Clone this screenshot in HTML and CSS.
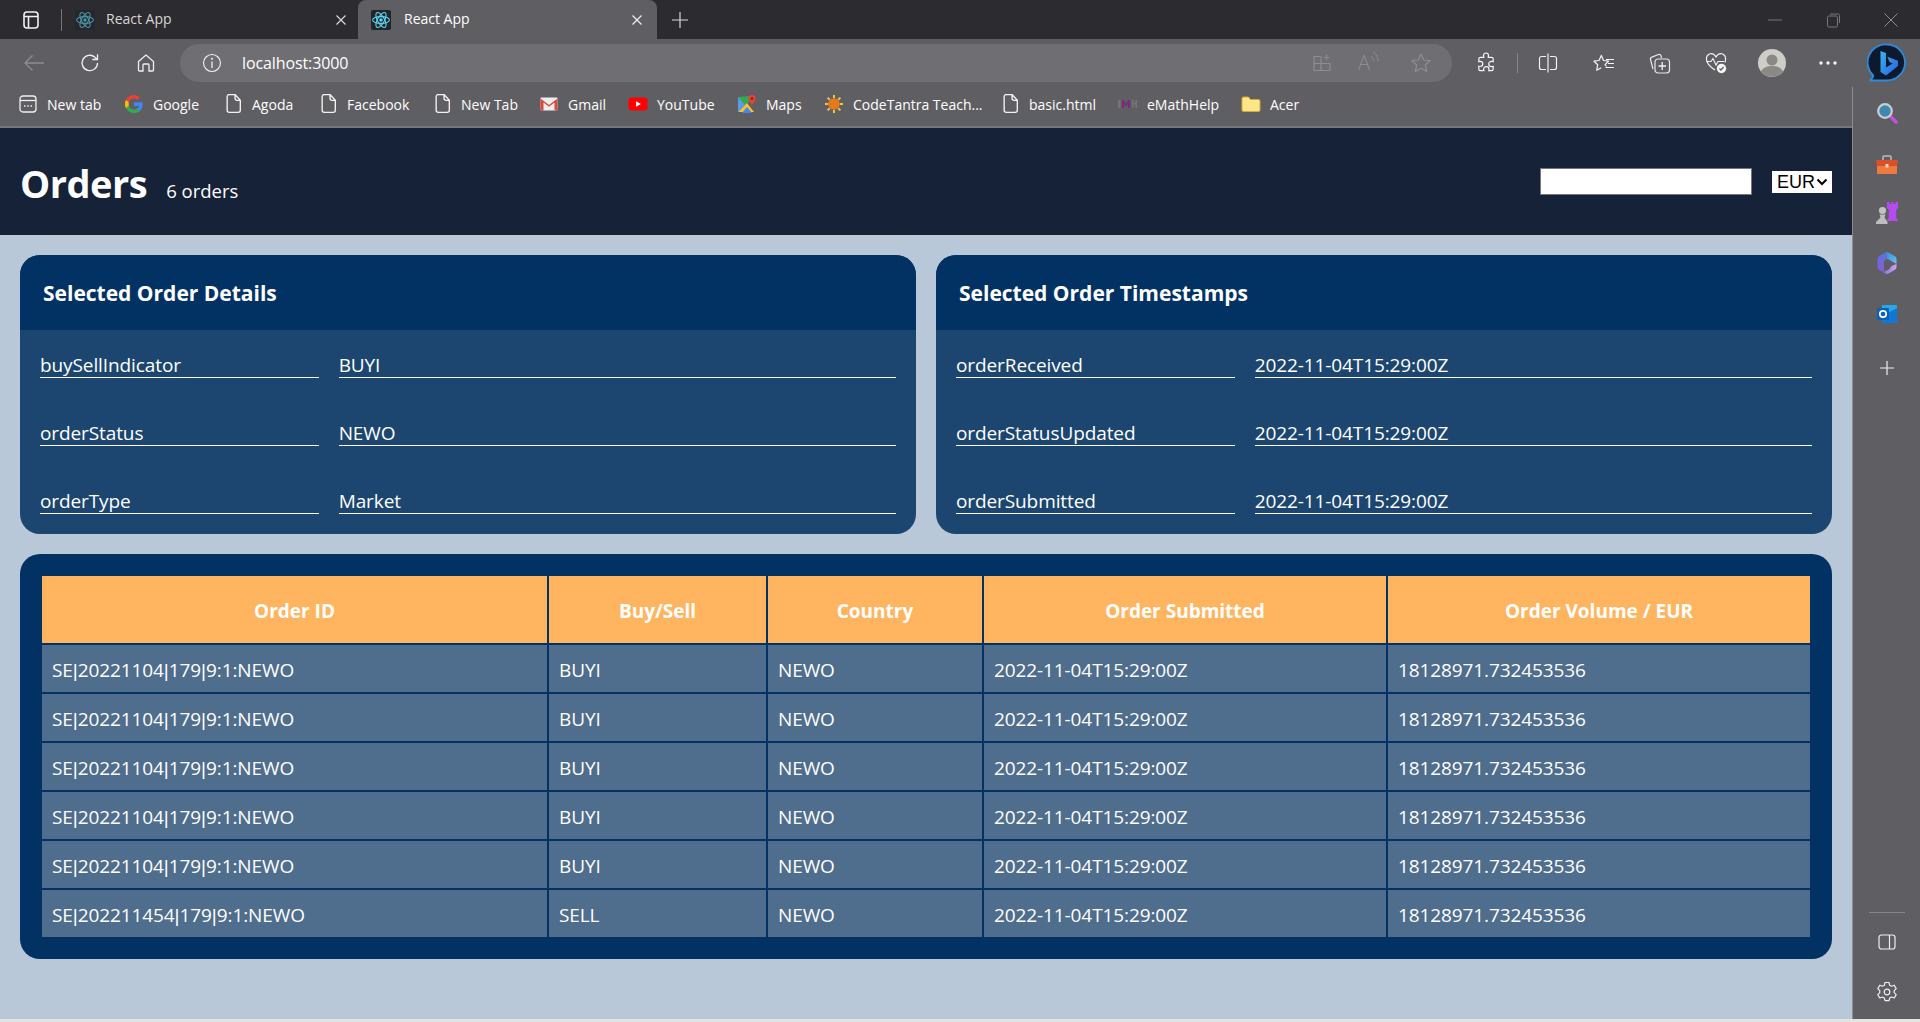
FILE: index.html
```html
<!DOCTYPE html>
<html lang="en">
<head>
<meta charset="utf-8">
<title>React App</title>
<link rel="stylesheet" href="styles.css">
</head>
<body>
<svg class="defs" width="0" height="0" aria-hidden="true">
  <defs>
    <linearGradient id="bingG" x1="0" y1="0" x2="1" y2="1"><stop offset="0" stop-color="#37b4f0"/><stop offset="1" stop-color="#2a5fe0"/></linearGradient>
    <linearGradient id="copA" x1="0" y1="0" x2="1" y2="1"><stop offset="0" stop-color="#2f8fe0"/><stop offset="1" stop-color="#6fc0ee"/></linearGradient>
    <linearGradient id="copB" x1="0" y1="0" x2="1" y2="0"><stop offset="0" stop-color="#8f6be0"/><stop offset="1" stop-color="#c9a8ee"/></linearGradient>
    <linearGradient id="copC" x1="0" y1="0" x2="0" y2="1"><stop offset="0" stop-color="#5d70dc"/><stop offset="1" stop-color="#8a5cd8"/></linearGradient>
  </defs>
  <symbol id="react" viewBox="0 0 20 20">
    <rect width="20" height="20" rx="2" fill="#20262c"/>
    <g fill="none" stroke="#61d6ee" stroke-width="1.1">
      <ellipse cx="10" cy="10" rx="8.4" ry="3.4"/>
      <ellipse cx="10" cy="10" rx="8.4" ry="3.4" transform="rotate(60 10 10)"/>
      <ellipse cx="10" cy="10" rx="8.4" ry="3.4" transform="rotate(120 10 10)"/>
    </g>
    <circle cx="10" cy="10" r="1.7" fill="#61d6ee"/>
  </symbol>
  <symbol id="doc" viewBox="3 1 15 19">
    <path d="M4 3.500a2 2 0 0 1 2-2h5.500L16.500 7v9.500a2 2 0 0 1-2 2H6a2 2 0 0 1-2-2zM11.500 1.500V5a2 2 0 0 0 2 2h3" fill="none" stroke="#f2f2f2" stroke-width="1.300"/>
  </symbol>
</svg>

<div class="tabbar">
  <svg class="tabs-icon" width="20" height="20" viewBox="0 0 20 20"><path d="M3 5a3 3 0 0 1 3-3h8a3 3 0 0 1 3 3v10a3 3 0 0 1-3 3H6a3 3 0 0 1-3-3zM3 6.500h14M7.500 6.500V18" fill="none" stroke="#f0f0f0" stroke-width="1.600"/></svg>
  <span class="tab-sep"></span>
  <div class="tab tab-idle">
    <svg class="fav" width="20" height="20"><use href="#react"/></svg>
    <span class="tab-title">React App</span>
    <svg class="tab-x" width="12" height="12" viewBox="0 0 12 12"><path d="M1.500 1.500l9 9M10.500 1.500l-9 9" stroke="#d8d8d8" stroke-width="1.200"/></svg>
  </div>
  <div class="tab tab-active">
    <svg class="fav" width="20" height="20"><use href="#react"/></svg>
    <span class="tab-title">React App</span>
    <svg class="tab-x" width="12" height="12" viewBox="0 0 12 12"><path d="M1.500 1.500l9 9M10.500 1.500l-9 9" stroke="#f0f0f0" stroke-width="1.200"/></svg>
  </div>
  <svg class="tab-plus" width="18" height="18" viewBox="0 0 18 18"><path d="M9 1v16M1 9h16" stroke="#d8d8d8" stroke-width="1.200"/></svg>
  <div class="win">
    <svg width="16" height="16" viewBox="0 0 16 16"><path d="M1 8h14" stroke="#77767a" stroke-width="1"/></svg>
    <svg width="16" height="16" viewBox="0 0 16 16"><path d="M2.500 5.500a1.500 1.500 0 0 1 1.500-1.500h7a1.500 1.500 0 0 1 1.500 1.500v8a1.500 1.500 0 0 1-1.500 1.500H4a1.500 1.500 0 0 1-1.500-1.500zM5 2h7.500A1.500 1.500 0 0 1 14.500 3.500V11" fill="none" stroke="#77767a"/></svg>
    <svg width="16" height="16" viewBox="0 0 16 16"><path d="M1.500 1.500l13 13M14.500 1.500l-13 13" stroke="#8d8c90" stroke-width="1"/></svg>
  </div>
</div>

<div class="toolbar">
  <div class="slot"><svg width="22" height="18" viewBox="0 0 22 18"><path d="M21 9H2M9.500 1.500L2 9l7.500 7.500" fill="none" stroke="#8e8d91" stroke-width="1.300"/></svg></div>
  <div class="slot"><svg width="22" height="22" viewBox="0 0 22 22"><path d="M18.500 11a7.700 7.700 0 1 1-2.600-5.800L18.500 7.500M18.500 2.300v5.200h-5.200" fill="none" stroke="#f0f0f0" stroke-width="1.300"/></svg></div>
  <div class="slot"><svg width="20" height="20" viewBox="0 0 20 20"><path d="M2.500 8.500L10 2l7.500 6.500V17a1 1 0 0 1-1 1h-3.500v-6a1 1 0 0 0-1-1h-4a1 1 0 0 0-1 1v6H3.500a1 1 0 0 1-1-1z" fill="none" stroke="#f0f0f0" stroke-width="1.300"/></svg></div>
  <div class="addr">
    <svg width="20" height="20" viewBox="0 0 20 20"><circle cx="10" cy="10" r="8.500" fill="none" stroke="#f0f0f0" stroke-width="1.100"/><path d="M10 8.500V15" stroke="#f0f0f0" stroke-width="1.300"/><circle cx="10" cy="5.800" r="1" fill="#f0f0f0"/></svg>
    <span class="url">localhost:3000</span>
    <div class="addr-actions">
      <svg width="20" height="20" viewBox="0 0 20 20"><path d="M2 4.500a1 1 0 0 1 1-1h6v7H2zM2 10.500h7v7H3a1 1 0 0 1-1-1zM9 10.500h9v6a1 1 0 0 1-1 1H9zM14.500 1.500v6M11.500 4.500h6" fill="none" stroke="#8e8d91" stroke-width="1.200"/></svg>
      <div class="read"><span class="aloud">A</span><svg width="9" height="14" viewBox="0 0 9 14"><path d="M1 5c1.500.8 2.500 2.700 2.500 5M3 1c2.500 1.500 5 4.500 5 9" fill="none" stroke="#8e8d91" stroke-width="1"/></svg></div>
      <svg width="22" height="22" viewBox="0 0 22 22"><path d="M11 2l2.700 6 6.300.700-4.700 4.300 1.400 6.500L11 16.200 5.300 19.500 6.700 13 2 8.700 8.300 8z" fill="none" stroke="#8e8d91" stroke-width="1.200" stroke-linejoin="round"/></svg>
    </div>
  </div>
  <div class="slot slot-first"><svg width="20" height="22" viewBox="0 0 20 22"><path d="M7.500 3.500C7.500 2 8.700 1 10 1s2.500 1 2.500 2.500c0 .8-.3 1.300-.3 1.800h3.300c1 0 1.700.7 1.700 1.700v2.700c-.7-.2-1.100-.4-1.700-.4-1.500 0-2.800 1.200-2.800 2.700s1.300 2.700 2.800 2.700c.6 0 1-.2 1.700-.4v2.700c0 1-.7 1.700-1.700 1.700h-2.800c.2-.7.300-1 .3-1.500 0-1.500-1.200-2.600-2.700-2.600s-2.700 1.100-2.700 2.600c0 .5.100.8.300 1.500H4.500c-1 0-1.700-.7-1.700-1.700v-2.800c.5.200.9.300 1.300.3 1.500 0 2.700-1.200 2.700-2.700S5.600 9.300 4.100 9.300c-.4 0-.8.100-1.300.3V7c0-1 .7-1.700 1.700-1.700h3.300c0-.5-.3-1-.3-1.800z" fill="none" stroke="#f4f4f4" stroke-width="1.200"/></svg></div>
  <span class="tool-sep"></span>
  <div class="slot"><svg width="20" height="20" viewBox="0 0 20 20"><path d="M8 3.500H3.500a2 2 0 0 0-2 2v9a2 2 0 0 0 2 2H8M12 3.500h4.500a2 2 0 0 1 2 2v9a2 2 0 0 1-2 2H12M10 .5v19" fill="none" stroke="#f0f0f0" stroke-width="1.200"/></svg></div>
  <div class="slot"><svg width="22" height="20" viewBox="0 0 22 20"><path d="M13.500 13.500L12 11.600l3.500-3.400-5-.7L8.300 2.400 6 7.500l-5 .7 3.700 3.500-1 5.500 4.500-2.500" fill="none" stroke="#f4f4f4" stroke-width="1.200" stroke-linejoin="round"/><path d="M13 6.500h8M15 10.500h6M12.500 14.500H21" stroke="#f4f4f4" stroke-width="1.200"/></svg></div>
  <div class="slot"><svg width="22" height="22" viewBox="0 0 22 22"><path d="M4 17L1.500 7.500a2 2 0 0 1 1.400-2.400l6.600-2.600a2 2 0 0 1 2.500 1.200L12.500 6" fill="none" stroke="#e8e8e8" stroke-width="1.200"/><rect x="6" y="7" width="14.500" height="14" rx="3" fill="none" stroke="#e8e8e8" stroke-width="1.200"/><path d="M13.200 10v8M9.500 14h7.500" stroke="#f4f4f4" stroke-width="1.300"/></svg></div>
  <div class="slot"><svg width="22" height="22" viewBox="0 0 22 22"><path d="M10 18C5.500 15 1.500 12 1.500 7.500A4.800 4.800 0 0 1 11 5.500 4.800 4.800 0 0 1 20.500 7.500c0 1-.2 2-.7 3" fill="none" stroke="#f4f4f4" stroke-width="1.200"/><path d="M1.500 9.500H6l2-3 3 6.500 2-3.500h6" fill="none" stroke="#f4f4f4" stroke-width="1.100"/><circle cx="16.500" cy="16.500" r="4.700" fill="#f4f4f4"/><path d="M14.500 16.500l1.400 1.500 2.700-3" fill="none" stroke="#5f5e63" stroke-width="1.200"/></svg></div>
  <div class="slot"><svg width="28" height="28" viewBox="0 0 28 28"><circle cx="14" cy="14" r="14" fill="#cfcdc8"/><circle cx="14" cy="11" r="5.500" fill="#8b8984"/><path d="M3 22.500c2-4 6-5.500 11-5.500s9 1.500 11 5.500a14 14 0 0 1-22 0z" fill="#8b8984"/></svg></div>
  <div class="slot"><svg width="20" height="6" viewBox="0 0 20 6"><circle cx="3" cy="3" r="1.700" fill="#f4f4f4"/><circle cx="10" cy="3" r="1.700" fill="#f4f4f4"/><circle cx="17" cy="3" r="1.700" fill="#f4f4f4"/></svg></div>
  <div class="bing"><svg width="40" height="40" viewBox="0 0 40 40"><path d="M20 1.500a18 18 0 0 1 0 36H2.500c2-1 3.500-2.700 3.700-5A18 18 0 0 1 20 1.500z" fill="#0d1a2e" stroke="#2b8bdc" stroke-width="1.800"/><path d="M13.500 8l5.500 2v14.500l6.800-4-3.300-1.500-2.200-5.300 10.700 4v5.300L19 32.500 13.500 29z" fill="url(#bingG)"/></svg></div>
</div>

<div class="workspace">
  <div class="content">
    <div class="bookmarks">
      <div class="bm"><svg width="20" height="20" viewBox="0 0 20 20"><rect x="2" y="2" width="16" height="16" rx="3" fill="none" stroke="#f0f0f0" stroke-width="1.300"/><path d="M2 6.500h16" stroke="#f0f0f0" stroke-width="1.300"/><path d="M6 12h1.500M9.300 12h1.500M12.500 12H14" stroke="#f0f0f0" stroke-width="1.500"/></svg><span>New tab</span></div>
      <div class="bm"><svg width="20" height="20" viewBox="0 0 20 20"><path d="M18.700 10.200c0-.7-.1-1.300-.2-1.900H10v3.600h4.900a4.200 4.200 0 0 1-1.800 2.700v2.300h2.900c1.700-1.600 2.700-3.900 2.700-6.700z" fill="#4285f4"/><path d="M10 19c2.400 0 4.500-.8 6-2.100l-2.900-2.300c-.8.600-1.900.9-3.100.9-2.400 0-4.400-1.600-5.100-3.800h-3v2.300A9 9 0 0 0 10 19z" fill="#34a853"/><path d="M4.900 11.700a5.400 5.400 0 0 1 0-3.400V6H1.900a9 9 0 0 0 0 8z" fill="#fbbc05"/><path d="M10 4.600c1.300 0 2.500.5 3.400 1.400L16 3.400A9 9 0 0 0 1.900 6l3 2.300C5.600 6.200 7.600 4.600 10 4.600z" fill="#ea4335"/></svg><span>Google</span></div>
      <div class="bm"><svg class="doc" width="18" height="20"><use href="#doc"/></svg><span>Agoda</span></div>
      <div class="bm"><svg class="doc" width="18" height="20"><use href="#doc"/></svg><span>Facebook</span></div>
      <div class="bm"><svg class="doc" width="18" height="20"><use href="#doc"/></svg><span>New Tab</span></div>
      <div class="bm"><svg width="20" height="20" viewBox="0 0 20 20"><rect x="1.500" y="3.500" width="17" height="13" rx="1" fill="#eee"/><path d="M1.500 4.500L10 11l8.500-6.500V16.500h-3V8.500L10 12.800 4.500 8.500v8h-3z" fill="#d54c3f"/></svg><span>Gmail</span></div>
      <div class="bm"><svg width="20" height="20" viewBox="0 0 20 20"><rect x="0.500" y="3.500" width="19" height="13" rx="3.500" fill="#f00"/><path d="M8 7.200l5 2.800-5 2.800z" fill="#fff"/></svg><span>YouTube</span></div>
      <div class="bm"><svg width="20" height="20" viewBox="0 0 20 20"><path d="M1 3l11-1v6L1 18z" fill="#35a853"/><path d="M1 18L10 9l7 9z" fill="#fbc02d"/><path d="M1 3l7 8-7 7z" fill="#5a9be8"/><path d="M5 19l5-6 5 6z" fill="#4285f4"/><path d="M15 1a3.500 3.500 0 0 0-3.500 3.500C11.500 7 15 11 15 11s3.500-4 3.500-6.500A3.500 3.500 0 0 0 15 1z" fill="#e94235"/><circle cx="15" cy="4.500" r="1.200" fill="#7a1d16"/></svg><span>Maps</span></div>
      <div class="bm"><svg width="20" height="20" viewBox="0 0 20 20"><path d="M10 1v3M10 16v3M1 10h3M16 10h3M3.600 3.600l2.200 2.200M14.200 14.200l2.200 2.200M3.600 16.400l2.200-2.200M14.200 5.800l2.200-2.200" stroke="#e6c84f" stroke-width="2"/><circle cx="10" cy="10" r="5.800" fill="#e8791a"/></svg><span>CodeTantra Teach...</span></div>
      <div class="bm"><svg class="doc" width="18" height="20"><use href="#doc"/></svg><span>basic.html</span></div>
      <div class="bm"><svg width="20" height="20" viewBox="0 0 20 20"><path d="M0 6h2.500v8H0z" fill="#77757a"/><path d="M4 14V6h2l2 4 2-4h2v8h-2V9.500L8 13 6 9.500V14z" fill="#7c2a7c"/><path d="M14 6h1.500v3h2V6H19v8h-1.500v-3.500h-2V14H14z" fill="#77757a"/></svg><span>eMathHelp</span></div>
      <div class="bm"><svg width="20" height="20" viewBox="0 0 20 20"><path d="M1 4.500a1.500 1.500 0 0 1 1.500-1.500h5l2 2.500h8A1.500 1.500 0 0 1 19 7v9a1.500 1.500 0 0 1-1.500 1.500h-15A1.500 1.500 0 0 1 1 16z" fill="#fce58a" stroke="#d8a92a" stroke-width="1"/></svg><span>Acer</span></div>
    </div>

    <main class="page">
      <header class="page-head">
        <div class="title-group">
          <h1>Orders</h1>
          <span class="count">6 orders</span>
        </div>
        <div class="controls">
          <input class="search" type="text" aria-label="Search">
          <select class="currency" aria-label="Currency"><option>EUR</option></select>
        </div>
      </header>

      <div class="dash">
        <section class="card">
          <h2>Selected Order Details</h2>
          <div class="fields">
            <div class="field">buySellIndicator</div><div class="field">BUYI</div>
            <div class="field">orderStatus</div><div class="field">NEWO</div>
            <div class="field">orderType</div><div class="field">Market</div>
          </div>
        </section>
        <section class="card">
          <h2>Selected Order Timestamps</h2>
          <div class="fields">
            <div class="field">orderReceived</div><div class="field">2022-11-04T15:29:00Z</div>
            <div class="field">orderStatusUpdated</div><div class="field">2022-11-04T15:29:00Z</div>
            <div class="field">orderSubmitted</div><div class="field">2022-11-04T15:29:00Z</div>
          </div>
        </section>
        <section class="card table-card">
          <table>
            <colgroup><col class="c1"><col class="c2"><col class="c3"><col class="c4"><col class="c5"></colgroup>
            <thead><tr><th>Order ID</th><th>Buy/Sell</th><th>Country</th><th>Order Submitted</th><th>Order Volume / EUR</th></tr></thead>
            <tbody>
              <tr><td>SE<span class="pipe">|</span>20221104<span class="pipe">|</span>179<span class="pipe">|</span>9:1:NEWO</td><td>BUYI</td><td>NEWO</td><td>2022-11-04T15:29:00Z</td><td>18128971.732453536</td></tr>
              <tr><td>SE<span class="pipe">|</span>20221104<span class="pipe">|</span>179<span class="pipe">|</span>9:1:NEWO</td><td>BUYI</td><td>NEWO</td><td>2022-11-04T15:29:00Z</td><td>18128971.732453536</td></tr>
              <tr><td>SE<span class="pipe">|</span>20221104<span class="pipe">|</span>179<span class="pipe">|</span>9:1:NEWO</td><td>BUYI</td><td>NEWO</td><td>2022-11-04T15:29:00Z</td><td>18128971.732453536</td></tr>
              <tr><td>SE<span class="pipe">|</span>20221104<span class="pipe">|</span>179<span class="pipe">|</span>9:1:NEWO</td><td>BUYI</td><td>NEWO</td><td>2022-11-04T15:29:00Z</td><td>18128971.732453536</td></tr>
              <tr><td>SE<span class="pipe">|</span>20221104<span class="pipe">|</span>179<span class="pipe">|</span>9:1:NEWO</td><td>BUYI</td><td>NEWO</td><td>2022-11-04T15:29:00Z</td><td>18128971.732453536</td></tr>
              <tr><td>SE<span class="pipe">|</span>202211454<span class="pipe">|</span>179<span class="pipe">|</span>9:1:NEWO</td><td>SELL</td><td>NEWO</td><td>2022-11-04T15:29:00Z</td><td>18128971.732453536</td></tr>
            </tbody>
          </table>
        </section>
      </div>
    </main>
  </div>

  <aside class="sidebar">
    <div class="side-icon"><svg width="22" height="22" viewBox="0 0 22 22"><path d="M14 14l6 6" stroke="#c44fe0" stroke-width="3.500" stroke-linecap="round"/><circle cx="9" cy="9" r="6.800" fill="#3f87ad" stroke="#c9ced2" stroke-width="2.200"/></svg></div>
    <div class="side-icon"><svg width="24" height="22" viewBox="0 -2 24 22"><path d="M8 6V3a1 1 0 0 1 1-1h6a1 1 0 0 1 1 1v3" fill="none" stroke="#bdbdbd" stroke-width="1.500"/><path d="M1 6h22l-1 6H2z" fill="#d9502c"/><path d="M2 12h20v7a1 1 0 0 1-1 1H3a1 1 0 0 1-1-1z" fill="#ef7a3d"/><rect x="10.500" y="10" width="3" height="3.500" fill="#e8d2c8"/></svg></div>
    <div class="side-icon"><svg width="24" height="24" viewBox="0 0 24 24"><path d="M12 1h2.500v2h2V1h2v2h2V1H23v6l-1.800 2v8l1.800 2v1H12v-1l1.800-2V9L12 7z" fill="#b54af0"/><circle cx="7.500" cy="9.500" r="3.600" fill="#c2c2c2"/><path d="M4.500 13.500h6l-1 3 3 4.500v2H1v-2l4.500-4.500z" fill="#bdbdbd"/></svg></div>
    <div class="side-icon"><svg width="22" height="24" viewBox="0 0 22 24"><path d="M10 1.300a2 2 0 0 1 2 0l7 4a3 3 0 0 1 1.500 2.600V13L14 9.200 11 7.500z" fill="url(#copA)"/><path d="M20.500 13v3.100a3 3 0 0 1-1.500 2.600l-7 4a2 2 0 0 1-2 0L7 21l6-2.500 2.500-3.500z" fill="url(#copB)"/><path d="M10 1.300L3 5.300a3 3 0 0 0-1.500 2.600v8.200A3 3 0 0 0 3 18.700L7 21c1-1 1-2 1-3.500V10.500l3-3z" fill="url(#copC)"/><path d="M8 10.500l6-1.300 1.500 5.800L8 18z" fill="#5f5e63"/></svg></div>
    <div class="side-icon"><svg width="22" height="22" viewBox="0 -1 22 22"><path d="M6 2h14a1 1 0 0 1 1 1v16a1 1 0 0 1-1 1H6z" fill="#28a8ea"/><path d="M10 11l11-6v14a1 1 0 0 1-1 1H6v-9z" fill="#0f78d4"/><rect x="1" y="5" width="12" height="12" rx="1" fill="#0a62b8"/><circle cx="7" cy="11" r="3.200" fill="none" stroke="#fff" stroke-width="1.700"/></svg></div>
    <div class="side-icon side-plus"><svg width="16" height="16" viewBox="0 0 16 16"><path d="M8 1v14M1 8h14" stroke="#f0f0f0" stroke-width="1.200"/></svg></div>
    <div class="side-bottom">
      <span class="side-rule"></span>
      <svg width="18" height="16" viewBox="0 0 18 16"><rect x="1" y="1" width="16" height="14" rx="2.500" fill="none" stroke="#f0f0f0" stroke-width="1.200"/><path d="M11.500 1v14" stroke="#f0f0f0" stroke-width="1.200"/></svg>
      <svg class="gear" width="22" height="22" viewBox="0 0 22 22"><path d="M9 1.500h4l.7 2.800 1.800.9 2.700-1 2 3.400-2 2v2l2 2-2 3.400-2.700-1-1.800 1-.7 2.700H9l-.7-2.700-1.800-1-2.700 1-2-3.400 2-2v-2l-2-2 2-3.400 2.700 1 1.800-.9z" fill="none" stroke="#f0f0f0" stroke-width="1.200" stroke-linejoin="round"/><circle cx="11" cy="11" r="2.800" fill="none" stroke="#f0f0f0" stroke-width="1.200"/></svg>
    </div>
  </aside>
</div>
<div class="edge"></div>
</body>
</html>
```
FILE: styles.css
```css
* { box-sizing: border-box; }
html, body { margin: 0; height: 1022px; overflow: hidden; }
body { font-family: "Open Sans", "Noto Sans", sans-serif; color: #fff; background: #5f5e63; display: flex; flex-direction: column; }
.defs { position: absolute; }
svg { display: block; flex: none; }

.tabbar { height: 39px; background: #2c2b30; display: flex; align-items: center; padding-left: 21px; }
.tab-sep { width: 1px; height: 22px; background: #77767a; margin: 0 13px 0 20px; }
.tab { height: 39px; display: flex; align-items: center; font-size: 14px; }
.tab-idle { width: 283px; color: #d6d6d6; }
.tab-idle .fav { opacity: .6; margin-right: 11px; }
.tab-active { width: 299px; padding-left: 13px; background: #5f5e63; border-radius: 8px 8px 0 0; }
.fav { margin-right: 13px; }
.tab-title { flex: 1; padding-bottom: 2px; }
.tab-idle .tab-x { margin-right: 11px; }
.tab-active .tab-x { margin-right: 14px; }
.tab-plus { margin-left: 14px; }
.win { margin-left: auto; display: flex; }
.win svg { margin: 0 21px; }

.toolbar { height: 43px; display: flex; align-items: center; padding-left: 6px; padding-top: 5px; background: #5f5e63; }
.slot { width: 56px; height: 38px; display: flex; align-items: center; justify-content: center; }
.addr { width: 1272px; height: 38px; margin-left: 6px; padding: 0 20px 0 22px; background: #6f6e73; border-radius: 19px; display: flex; align-items: center; }
.url { margin-left: 20px; font-size: 16px; letter-spacing: -0.1px; }
.addr-actions { margin-left: auto; display: flex; align-items: center; gap: 26px; }
.read { display: flex; align-items: flex-start; width: 26px; }
.aloud { font-size: 20px; font-weight: 300; line-height: 24px; color: #8e8d91; }
.slot-first { margin-left: 6px; }
.tool-sep { width: 1px; height: 20px; background: #858488; margin: 0 2px 0 3px; }
.bing { margin-left: 3px; width: 56px; display: flex; justify-content: center; }

.workspace { flex: 1; display: flex; min-height: 0; }
.content { flex: 1; display: flex; flex-direction: column; min-width: 0; }
.bookmarks { height: 46px; padding: 1px 0 1px 18px; display: grid; grid-template-columns: 106px 101px 95px 114px 105px 89px 109px 87px 178px 116px 123px 60px; align-items: center; border-bottom: 2px solid #77767a; font-size: 14px; }
.bm { display: flex; align-items: center; gap: 9px; white-space: nowrap; }

.page { flex: 1; background: #b8c8d8; min-height: 0; }
.page-head { height: 107px; background: #152238; padding: 0 20px; display: flex; justify-content: space-between; align-items: center; }
.title-group { display: flex; align-items: baseline; gap: 19px; padding-top: 2px; }
h1 { margin: 0; font-size: 38px; font-weight: 700; letter-spacing: -0.5px; }
.count { font-size: 18.5px; }
.controls { display: flex; align-items: center; gap: 20px; }
.search { width: 212px; height: 27px; border: 1px solid #767676; background: #fff; padding: 0; border-radius: 0; }
.currency { width: 60px; height: 22px; border: 0; border-radius: 0; appearance: none; color: #000; font-family: "Liberation Sans", sans-serif; font-size: 18px; padding: 0 0 0 5px; background: #fff url("data:image/svg+xml,%3Csvg xmlns='http://www.w3.org/2000/svg' width='12' height='8'%3E%3Cpath d='M1.500 1.500L6 6l4.500-4.500' fill='none' stroke='%23000' stroke-width='2'/%3E%3C/svg%3E") no-repeat right 4px center; }

.dash { padding: 20px; display: grid; grid-template-columns: 1fr 1fr; gap: 20px; }
.card { background: #1c4670; border-radius: 20px; overflow: hidden; }
h2 { margin: 0; height: 75px; padding: 0 23px; background: #023264; display: flex; align-items: center; font-size: 21px; font-weight: 700; }
.fields { padding: 20px; display: grid; grid-template-columns: 1fr 2fr; column-gap: 20px; row-gap: 40px; }
.field { height: 28px; border-bottom: 1px solid #fff; font-size: 19px; line-height: 30px; letter-spacing: -0.1px; white-space: nowrap; }

.table-card { grid-column: 1 / -1; background: #023264; padding: 20px; }
table { width: 100%; table-layout: fixed; border-collapse: separate; border-spacing: 2px; }
.c1 { width: 505px; } .c2 { width: 217px; } .c3 { width: 214px; } .c4 { width: 402px; } .c5 { width: 422px; }
th { height: 67px; background: #ffb55f; font-size: 19px; font-weight: 700; text-align: center; padding: 2px 10px 0; }
td { height: 47px; background: #4f6d8d; font-size: 19px; padding: 2px 10px 0; letter-spacing: -0.1px; white-space: nowrap; }
.pipe { font-family: "Liberation Sans", sans-serif; font-weight: 400; letter-spacing: 0; }

.sidebar { width: 68px; border-left: 1px solid #8d8c90; margin-top: 5px; display: flex; flex-direction: column; align-items: center; }
.side-icon { height: 50px; width: 100%; display: flex; align-items: center; justify-content: center; }
.side-icon:first-child { margin-top: 1px; }
.side-plus { margin-top: 5px; }
.side-bottom { margin-top: auto; width: 100%; display: flex; flex-direction: column; align-items: center; padding-bottom: 16px; }
.side-rule { width: 36px; height: 1px; background: #858488; margin-bottom: 21px; }
.gear { margin-top: 31px; }
.edge { height: 3px; background: #e4e4df; }
```
